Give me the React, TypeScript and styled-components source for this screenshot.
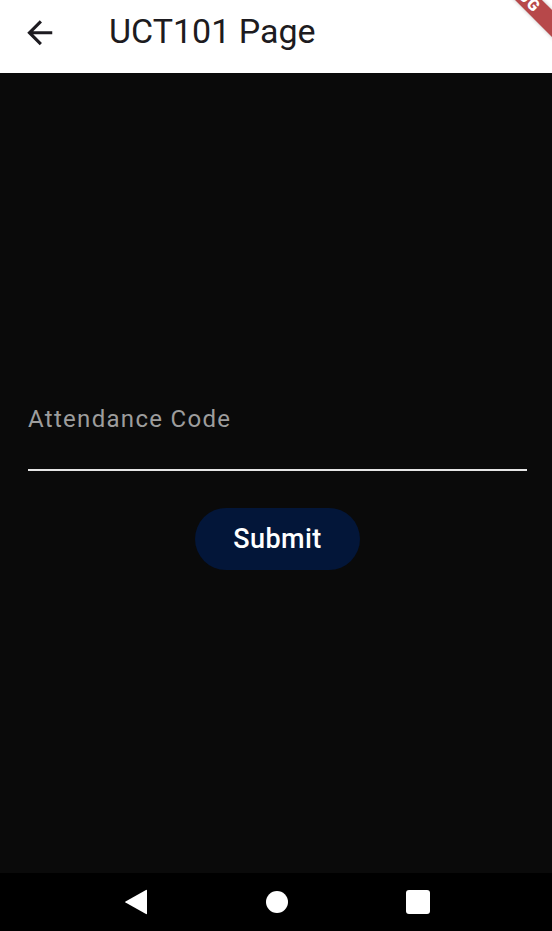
import React from "react";
import styled, { createGlobalStyle } from "styled-components";

const Global = createGlobalStyle`
  html, body { margin: 0; padding: 0; background: #0a0a0a; }
  body { font-family: Roboto, "Noto Sans", sans-serif; }
  * { box-sizing: border-box; }
`;

const Screen = styled.div`
  position: relative;
  width: 552px;
  height: 931px;
  display: flex;
  flex-direction: column;
  overflow: hidden;
  background: #0a0a0a;
`;

const AppBar = styled.header`
  height: 73px;
  flex: none;
  background: #ffffff;
  display: flex;
  align-items: center;
  padding: 0 0 8px 21px;
`;

const BackButton = styled.button`
  width: 38px;
  height: 38px;
  padding: 0;
  border: none;
  background: transparent;
  display: flex;
  align-items: center;
  justify-content: center;
  color: #1d1b20;
`;

const Title = styled.h1`
  margin: 0 0 4px 50px;
  font-family: Roboto, sans-serif;
  font-weight: 400;
  font-size: 34px;
  line-height: 40px;
  color: #1d1b20;
`;

const Body = styled.main`
  flex: 1;
  background: #0a0a0a;
  display: flex;
  flex-direction: column;
  justify-content: center;
  padding: 0 25px 0 28px;
`;

const Field = styled.label`
  display: block;
  padding-top: 27px;
  border-bottom: 2px solid #e6e6e6;
`;

const FieldLabel = styled.span`
  display: block;
  font-family: Roboto, sans-serif;
  font-size: 24px;
  line-height: 32px;
  letter-spacing: 1.3px;
  color: #9d9d9d;
  padding-bottom: 34px;
`;

const SubmitButton = styled.button`
  align-self: center;
  margin-top: 37px;
  width: 165px;
  height: 62px;
  border: none;
  border-radius: 31px;
  background: #031639;
  color: #ffffff;
  font-family: Roboto, sans-serif;
  font-weight: 500;
  font-size: 27px;
  letter-spacing: 0.4px;
  padding: 0;
`;

const NavBar = styled.nav`
  height: 58px;
  flex: none;
  background: #000000;
  display: flex;
  align-items: center;
  justify-content: center;
  gap: 93px;
  padding-left: 1px;
`;

const NavItem = styled.div`
  width: 48px;
  height: 48px;
  display: flex;
  align-items: center;
  justify-content: center;
`;

const Banner = styled.div`
  position: absolute;
  left: 408px;
  top: -20px;
  width: 220px;
  height: 19px;
  background: rgba(170, 40, 42, 0.85);
  color: #ffffff;
  font-family: Roboto, sans-serif;
  font-weight: 900;
  font-size: 16px;
  line-height: 19px;
  text-align: center;
  letter-spacing: 1px;
  transform: rotate(45deg);
  box-shadow: 0 0 4px rgba(0, 0, 0, 0.25);
`;

export default function App() {
  return (
    <>
      <Global />
      <Screen>
        <AppBar>
          <BackButton aria-label="Back">
            <svg width="37.5" height="37.5" viewBox="0 0 24 24" fill="currentColor">
              <path d="M20 11H7.83l5.59-5.59L12 4l-8 8 8 8 1.41-1.41L7.83 13H20v-2z" />
            </svg>
          </BackButton>
          <Title>UCT101 Page</Title>
        </AppBar>
        <Body>
          <Field>
            <FieldLabel>Attendance Code</FieldLabel>
          </Field>
          <SubmitButton>Submit</SubmitButton>
        </Body>
        <NavBar>
          <NavItem>
            <svg width="24" height="26" viewBox="0 0 24 26">
              <path d="M23 1.5 L23 24.5 Q23 25.5 22 25 L1.5 13.6 Q0.6 13 1.5 12.4 L22 1 Q23 0.5 23 1.5 Z" fill="#fff" />
            </svg>
          </NavItem>
          <NavItem>
            <svg width="22" height="22" viewBox="0 0 22 22">
              <circle cx="11" cy="11" r="11" fill="#fff" />
            </svg>
          </NavItem>
          <NavItem>
            <svg width="24" height="24" viewBox="0 0 24 24">
              <rect x="0" y="0" width="24" height="24" rx="3" fill="#fff" />
            </svg>
          </NavItem>
        </NavBar>
        <Banner>DEBUG</Banner>
      </Screen>
    </>
  );
}
